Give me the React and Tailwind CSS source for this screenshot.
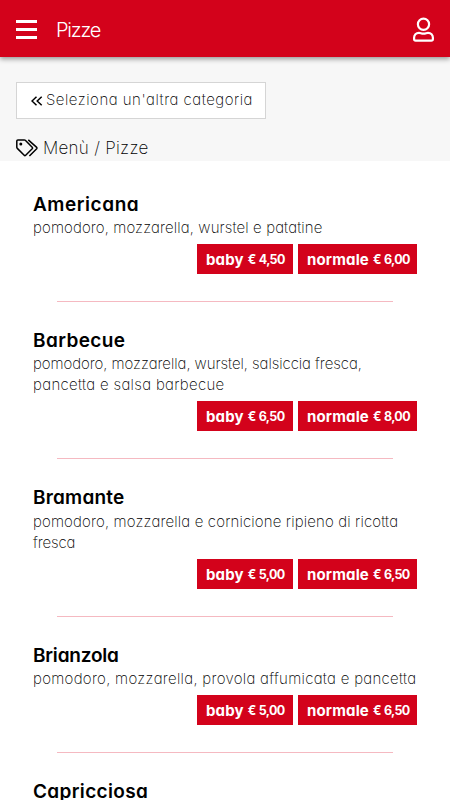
import React from 'react';

const pizze = [
    {
        nome: 'Americana',
        nomeClass: 'tracking-[0.55px]',
        righe: [{ testo: 'pomodoro, mozzarella, wurstel e patatine', className: 'tracking-[0.11px]' }],
        baby: '4,50',
        normale: '6,00',
    },
    {
        nome: 'Barbecue',
        nomeClass: 'tracking-[0.4px]',
        righe: [
            { testo: 'pomodoro, mozzarella, wurstel, salsiccia fresca,', className: 'tracking-[-0.06px]' },
            { testo: 'pancetta e salsa barbecue', className: 'tracking-[0.32px]' },
        ],
        baby: '6,50',
        normale: '8,00',
    },
    {
        nome: 'Bramante',
        nomeClass: 'tracking-[0.2px]',
        righe: [
            { testo: 'pomodoro, mozzarella e cornicione ripieno di ricotta', className: 'tracking-[0.14px]' },
            { testo: 'fresca', className: 'tracking-[-0.1px]' },
        ],
        baby: '5,00',
        normale: '6,50',
    },
    {
        nome: 'Brianzola',
        nomeClass: 'tracking-[-0.2px]',
        righe: [{ testo: 'pomodoro, mozzarella, provola affumicata e pancetta', className: 'tracking-[0.29px]' }],
        baby: '5,00',
        normale: '6,50',
    },
    { nome: 'Capricciosa', nomeClass: 'tracking-[0.35px]' },
];

const UserIcon = () => (
    <svg width="22" height="26" viewBox="0 0 22 26" fill="none" stroke="white" strokeWidth="2.2">
        <circle cx="11.5" cy="7.3" r="5.6" />
        <path d="M7 15.9 C4 15.9 2.1 18 2.1 20.8 V22 Q2.1 23.6 3.7 23.6 H19.3 Q20.9 23.6 20.9 22 V20.8 C20.9 18 19 15.9 16 15.9 C14.5 15.9 13.7 16.7 11.5 16.7 C9.3 16.7 8.5 15.9 7 15.9 Z" />
    </svg>
);

const TagsIcon = () => (
    <svg width="22" height="18" viewBox="0 0 22 18" fill="none" stroke="black" strokeWidth="1.5" strokeLinejoin="round">
        <path d="M0.8 2 Q0.8 0.9 1.9 0.9 H8.3 Q8.9 0.9 9.3 1.3 L16.2 8.2 Q16.9 9 16.2 9.8 L9.7 16.3 Q8.9 17 8.2 16.3 L1.3 9.4 Q0.8 8.9 0.8 8.3 Z" />
        <path d="M12.3 0.9 L20.7 8.4 Q21.2 9 20.7 9.7 L13.4 17" />
        <circle cx="4.8" cy="4.9" r="1.5" fill="black" stroke="none" />
    </svg>
);

const Prezzo = ({ tipo, prezzo, className }) => (
    <button className={`h-[30px] bg-[#d3021b] text-white font-bold flex items-center pl-[9px] pt-px whitespace-nowrap ${className}`}>
        <span className="text-[15px] leading-[29px] tracking-[0.15px]">{tipo}</span>
        <span className="text-[12.5px] leading-[29px] ml-[4px] tracking-[-0.65px] [word-spacing:0.8px]">€ {prezzo}</span>
    </button>
);

const Pizza = ({ pizza }) => (
    <div className="px-[33px] pt-[28px]">
        <h3 className={`text-[19px] leading-[22px] font-semibold ${pizza.nomeClass}`}>{pizza.nome}</h3>
        {pizza.righe && (
            <>
                <div className="mt-[1.2px] text-[15px] leading-[21.5px] font-extralight">
                    {pizza.righe.map(riga => (
                        <p key={riga.testo} className={`whitespace-nowrap ${riga.className}`}>{riga.testo}</p>
                    ))}
                </div>
                <div className="flex justify-end gap-[5px] mt-[5.5px]">
                    <Prezzo tipo="baby" prezzo={pizza.baby} className="w-[96px]" />
                    <Prezzo tipo="normale" prezzo={pizza.normale} className="w-[119px]" />
                </div>
                <hr className="mt-[27px] mx-6 border-0 h-px bg-[#f5b9c1]" />
            </>
        )}
    </div>
);

const App = () => {
    return (
        <div className="h-[800px] overflow-hidden bg-white text-black font-[Inter,sans-serif] [font-feature-settings:'cv11']">
            {/* Header */}
            <header className="relative h-[57px] bg-[#d3021b] flex items-center px-4 shadow-[0_2px_5px_rgba(0,0,0,0.4)]">
                <button className="flex flex-col gap-[5px] w-[21px] mt-[2px]">
                    <span className="h-[3px] bg-white" />
                    <span className="h-[3px] bg-white" />
                    <span className="h-[3px] bg-white" />
                </button>
                <h1 className="ml-[19px] mt-[3px] text-[20px] font-light tracking-[-1.2px] text-white">Pizze</h1>
                <button className="ml-auto mt-[2px]">
                    <UserIcon />
                </button>
            </header>

            {/* Category */}
            <div className="h-[104px] bg-[#f7f7f7] px-4 pt-[25px]">
                <button className="w-[250px] h-[37px] bg-white border border-[#d5d5d5] flex items-center pl-[14px] text-[15px] font-extralight tracking-[0.5px] whitespace-nowrap">
                    <svg width="12" height="10" viewBox="0 0 12 10" fill="none" stroke="black" strokeWidth="1.5" className="mr-[3px]">
                        <path d="M5.5 0.7 L1 5 L5.5 9.3 M10.7 0.7 L6.2 5 L10.7 9.3" />
                    </svg>
                    Seleziona un'altra categoria
                </button>
                <div className="flex items-center mt-[16px] h-[26px] text-[17px] font-extralight tracking-[0.28px]">
                    <TagsIcon />
                    <span className="ml-[5px] mt-px">Menù / Pizze</span>
                </div>
            </div>

            {/* Menu */}
            <main className="pt-[4.5px]">
                {pizze.map(pizza => (
                    <Pizza key={pizza.nome} pizza={pizza} />
                ))}
            </main>
        </div>
    );
};

export default App;
